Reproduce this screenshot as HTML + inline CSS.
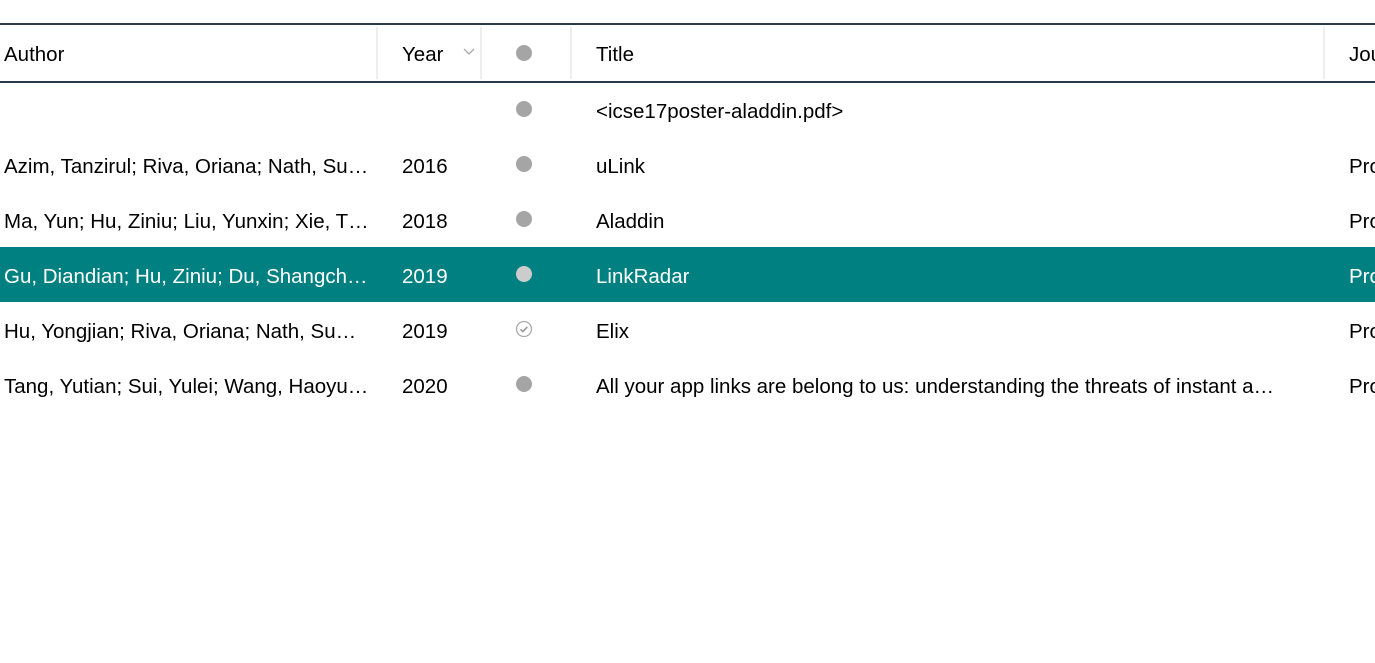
<html><head><style>
body{margin:0;width:1375px;height:663px;background:#fff;font-family:"Liberation Sans",sans-serif;font-size:20.5px;color:#000;overflow:hidden;position:relative}
.hdr{position:absolute;top:23px;left:0;width:1375px;height:56px;border-top:2px solid #2b3a4a;border-bottom:2px solid #2b3a4a}
.c{position:absolute;white-space:nowrap;overflow:hidden}
.div{position:absolute;top:2px;width:2px;height:52px;background:#eee}
.row{position:absolute;left:0;width:1375px;height:55px}
.row .c{top:2px;line-height:55px}
.dot{position:absolute;left:516px;width:16px;height:16px;border-radius:50%;background:#a5a5a5}
.sel{background:#008080;color:#fff}
</style></head><body>
<div class="hdr">
<div class="c" style="left:4px;top:2px;line-height:56px">Author</div>
<div class="div" style="left:376px"></div>
<div class="c" style="left:402px;top:2px;line-height:56px">Year</div>
<svg style="position:absolute;left:463px;top:23px" width="12" height="8"><path d="M1 1l5 5 5-5" stroke="#aaa" stroke-width="1.3" fill="none"/></svg>
<div class="div" style="left:480px"></div>
<div class="dot" style="top:20px"></div>
<div class="div" style="left:570px"></div>
<div class="c" style="left:596px;top:2px;line-height:56px">Title</div>
<div class="div" style="left:1323px"></div>
<div class="c" style="left:1349px;top:2px;line-height:56px">Journal</div>
</div>
<div class="row" style="top:82px"><div class="dot" style="top:19px"></div><div class="c" style="left:596px">&lt;icse17poster-aladdin.pdf&gt;</div></div>
<div class="row" style="top:137px"><div class="c" style="left:4px;width:372px">Azim, Tanzirul; Riva, Oriana; Nath, Su…</div><div class="c" style="left:402px">2016</div><div class="dot" style="top:19px"></div><div class="c" style="left:596px">uLink</div><div class="c" style="left:1349px">Proc</div></div>
<div class="row" style="top:192px"><div class="c" style="left:4px;width:372px">Ma, Yun; Hu, Ziniu; Liu, Yunxin; Xie, T…</div><div class="c" style="left:402px">2018</div><div class="dot" style="top:19px"></div><div class="c" style="left:596px">Aladdin</div><div class="c" style="left:1349px">Proc</div></div>
<div class="row sel" style="top:247px"><div class="c" style="left:4px;width:372px">Gu, Diandian; Hu, Ziniu; Du, Shangch…</div><div class="c" style="left:402px">2019</div><div class="dot" style="top:19px;background:#ccc"></div><div class="c" style="left:596px">LinkRadar</div><div class="c" style="left:1349px">Proc</div></div>
<div class="row" style="top:302px"><div class="c" style="left:4px;width:372px">Hu, Yongjian; Riva, Oriana; Nath, Su…</div><div class="c" style="left:402px">2019</div>
<svg style="position:absolute;left:515px;top:18px" width="18" height="18"><circle cx="9" cy="9" r="7.5" stroke="#aaa" stroke-width="1.3" fill="none"/><path d="M5.5 9.3l2.3 2.3 4.5-4.7" stroke="#999" stroke-width="1.6" fill="none"/></svg>
<div class="c" style="left:596px">Elix</div><div class="c" style="left:1349px">Proc</div></div>
<div class="row" style="top:357px"><div class="c" style="left:4px;width:372px">Tang, Yutian; Sui, Yulei; Wang, Haoyu…</div><div class="c" style="left:402px">2020</div><div class="dot" style="top:19px"></div><div class="c" style="left:596px;width:722px">All your app links are belong to us: understanding the threats of instant a…</div><div class="c" style="left:1349px">Proc</div></div>
</body></html>
